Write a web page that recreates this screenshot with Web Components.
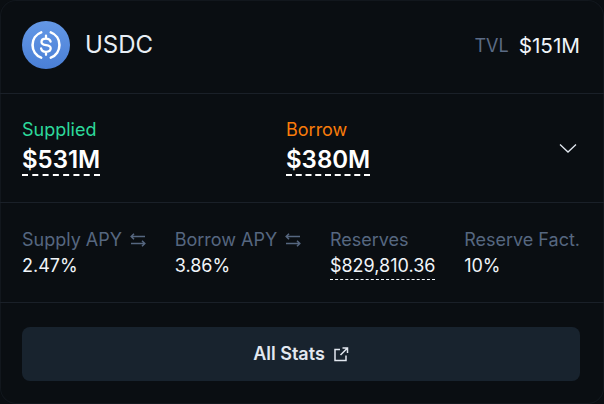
<!DOCTYPE html>
<html><head><meta charset="utf-8">
<style>
html,body{margin:0;padding:0;background:#0a0e12;}
body{font-family:Inter,"Liberation Sans",sans-serif;color:#f1f5f9;width:604px;height:404px;overflow:hidden;}
</style></head>
<body>
<market-card>
  <card-header slot="header" name="USDC" tvl="$151M"></card-header>
  <totals-row slot="totals">
    <total-stat label="Supplied" value="$531M" color="#2dd99b"></total-stat>
    <total-stat label="Borrow" value="$380M" color="#f97c0a"></total-stat>
  </totals-row>
  <stats-row slot="stats">
    <mini-stat label="Supply APY" value="2.47%" swap></mini-stat>
    <mini-stat label="Borrow APY" value="3.86%" swap></mini-stat>
    <mini-stat label="Reserves" value="$829,810.36" dashed></mini-stat>
    <mini-stat label="Reserve Fact." value="10%"></mini-stat>
  </stats-row>
  <link-button slot="action">All Stats</link-button>
</market-card>
<script>
function def(name, html){
  customElements.define(name, class extends HTMLElement{
    constructor(){super();this.attachShadow({mode:'open'});}
    connectedCallback(){
      const a=n=>this.getAttribute(n)||'';
      this.shadowRoot.innerHTML=html(a,this);
    }
  });
}
def('market-card',()=>`<style>
:host{display:flex;flex-direction:column;box-sizing:border-box;width:604px;height:404px;background:#0a0e12;border-radius:16px;box-shadow:inset 0 0 0 1px #12171d;}
.sec{border-bottom:1px solid #1a2028;}
.a{padding:24px 24px 23px 22px;}
</style>
<div class="sec"><slot name="header"></slot></div>
<div class="sec"><slot name="totals"></slot></div>
<div class="sec"><slot name="stats"></slot></div>
<div class="a"><slot name="action"></slot></div>`);
def('card-header',a=>`<style>
:host{display:flex;align-items:center;justify-content:space-between;box-sizing:border-box;height:93px;padding:0 24px 3px 22px;}
.l{display:flex;align-items:center;gap:15px;font-size:24px;line-height:32px;color:#e8eef5;}
.r{display:flex;align-items:center;gap:10px;}
.t{font-size:18px;color:#5b6b85;}
.v{font-size:20.700px;color:#f1f5f9;}
svg{display:block;}
</style>
<div class="l"><svg width="48" height="48" viewBox="0 0 48 48">
<defs><linearGradient id="g" x1="0" y1="0" x2="0" y2="1"><stop offset="0" stop-color="#6498e6"/><stop offset="1" stop-color="#4a7fd6"/></linearGradient></defs>
<circle cx="24" cy="24" r="24" fill="url(#g)"/>
<path d="M19.200 11.400A13.500 13.500 0 0 0 19.200 36.600M28.800 11.400A13.500 13.500 0 0 1 28.800 36.600" fill="none" stroke="#fff" stroke-width="2.600" stroke-linecap="round"/>
<path d="M28.600 20.600c-.4-1.900-2.200-3-4.600-3-2.600 0-4.500 1.300-4.500 3.300 0 2.100 1.800 2.800 4.500 3.200 2.800.4 4.700 1.100 4.700 3.200 0 2.100-2 3.500-4.700 3.500-2.600 0-4.500-1.200-4.900-3.300M24 14.600v3M24 30.800v3" fill="none" stroke="#fff" stroke-width="2.300" stroke-linecap="round"/>
</svg><span>${a('name')}</span></div>
<div class="r"><span class="t">TVL</span><span class="v">${a('tvl')}</span></div>`);
def('totals-row',()=>`<style>
:host{display:grid;grid-template-columns:264px 1fr 24px;align-items:start;box-sizing:border-box;height:108px;padding:24px 24px 0 22px;}
svg{display:block;margin-top:18px;}
</style><slot></slot><svg width="24" height="24" viewBox="0 0 24 24"><path d="M4 8.500l8 7.500 8-7.500" fill="none" stroke="#e2e8f0" stroke-width="1.300"/></svg>`);
def('total-stat',a=>`<style>
:host{display:block;}
.l{font-size:18px;line-height:24px;color:${a('color')};}
.v{display:block;width:fit-content;font-size:24px;line-height:32px;font-weight:600;color:#fff;border-bottom:2px dashed #fff;height:30px;margin-top:2px;}
</style><div class="l">${a('label')}</div><span class="v">${a('value')}</span>`);
def('stats-row',()=>`<style>
:host{display:flex;justify-content:space-between;box-sizing:border-box;height:99px;padding:25px 24px 0 22px;}
</style><slot></slot>`);
def('mini-stat',(a,el)=>`<style>
:host{display:block;}
.l{display:flex;align-items:center;gap:8px;font-size:18px;line-height:24px;color:#566780;white-space:nowrap;}
.v{display:block;width:fit-content;font-size:18px;line-height:24px;color:#f1f5f9;margin-top:2px;}
.d{border-bottom:1px dashed #f1f5f9;height:25px;}
svg{display:block;}
</style><div class="l">${a('label')}${el.hasAttribute('swap')?`<svg width="16" height="16" viewBox="0 0 16 16"><path d="M1 4.500H15M4 1.800L1.200 4.500 4 7.200M1 11.500H15M12 8.800L14.800 11.500 12 14.200" fill="none" stroke="#566780" stroke-width="1.500"/></svg>`:''}</div><span class="v ${el.hasAttribute('dashed')?'d':''}">${a('value')}</span>`);
def('link-button',()=>`<style>
:host{display:flex;align-items:center;justify-content:center;gap:8px;height:54px;background:#18232e;border-radius:8px;font-size:18px;font-weight:600;color:#e2e8f0;}
svg{display:block;}
span{margin-top:-1px;}
</style><span><slot></slot></span><svg width="16" height="16" viewBox="0 0 16 16"><path d="M7 3.500H2V14.500H13V9.500M9.500 2H14.500V7M14.500 2L7.500 9" fill="none" stroke="#e2e8f0" stroke-width="1.500"/></svg>`);
</script>
</body></html>
